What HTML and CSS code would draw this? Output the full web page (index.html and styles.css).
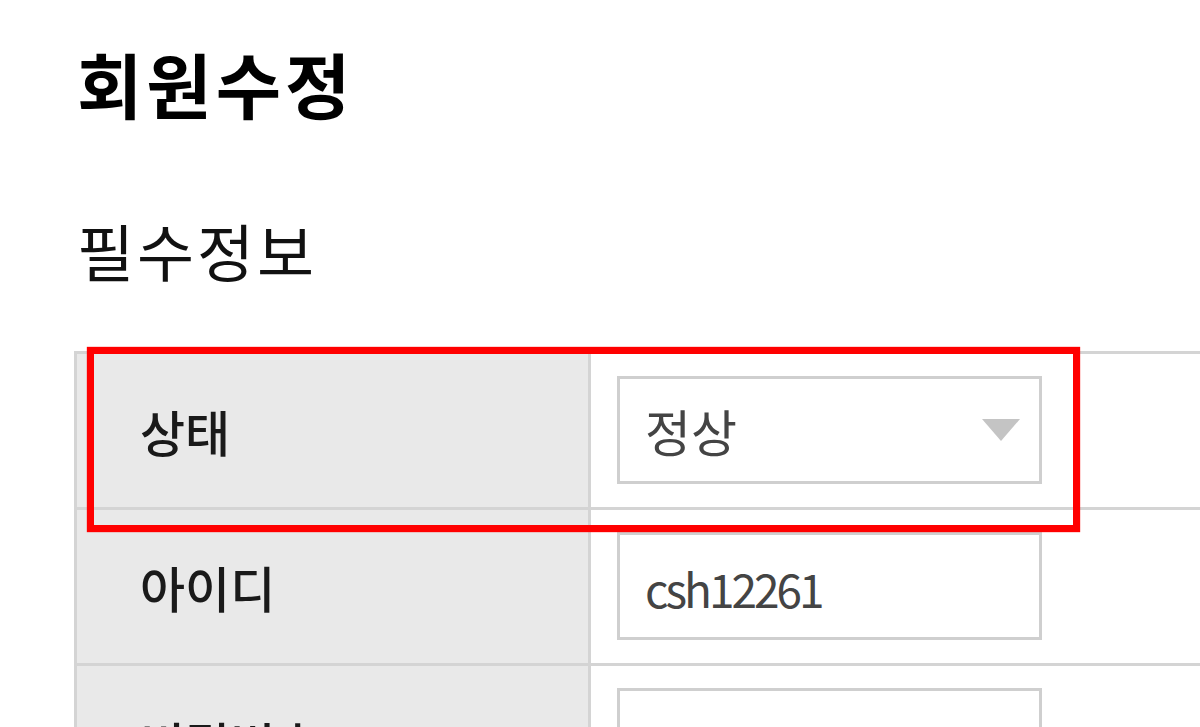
FILE: index.html
```html
<!DOCTYPE html>
<html>
<head>
    <title>회원수정</title>
    <link rel="stylesheet" href="styles.css">
</head>
<body>
    <div class="page">
        <h1>회원수정</h1>
        <h2>필수정보</h2>

        <div class="form-table">
            <div class="row">
                <div class="label">상태</div>
                <div class="field">
                    <div class="select">
                        <span>정상</span>
                        <span class="arrow"></span>
                    </div>
                </div>
            </div>
            <div class="row">
                <div class="label">아이디</div>
                <div class="field">
                    <div class="input">csh12261</div>
                </div>
            </div>
            <div class="row">
                <div class="label">비밀번호</div>
                <div class="field">
                    <div class="input"></div>
                </div>
            </div>
        </div>

        <!-- highlight box drawn over the first row -->
        <div class="highlight"></div>
    </div>
</body>
</html>
```

FILE: styles.css
```css
body { margin: 0; background: #fff; color: #111; font-family: "Noto Sans CJK KR", "Noto Sans", sans-serif; overflow: hidden; }
.page { position: relative; padding: 47px 0 0 77px; }
h1 { margin: 0; font-size: 71px; line-height: 1; font-weight: bold; color: #000; letter-spacing: 4px; }
h2 { margin: 101px 0 0; font-size: 62px; line-height: 1; font-weight: normal; color: #111; letter-spacing: 3px; }
.form-table { margin: 70px 0 0 -3px; width: 1200px; border-left: 3px solid #d4d4d4; }
.row { display: flex; border-top: 3px solid #d4d4d4; height: 153px; }
.label { width: 448px; padding-left: 63px; background: #e9e9e9; border-right: 3px solid #d4d4d4; display: flex; align-items: center; font-size: 49px; font-weight: 500; color: #1a1a1a; }
.field { flex: 1; padding: 22px 0 0 26px; }
.select, .input { box-sizing: border-box; width: 425px; height: 108px; border: 3px solid #cfcfcf; display: flex; align-items: center; padding: 0 22px 0 25px; font-size: 50px; color: #444; }
.select { justify-content: space-between; }
.input { font-size: 46px; letter-spacing: -3px; padding-top: 4px; }
.arrow { width: 0; height: 0; border-left: 19px solid transparent; border-right: 19px solid transparent; border-top: 22px solid #c4c4c4; margin-right: -3px; }
.highlight { position: absolute; left: 87px; top: 347px; width: 979px; height: 171px; border: 7px solid #ff0000; box-shadow: 0 0 1px #ff0000; }
```
